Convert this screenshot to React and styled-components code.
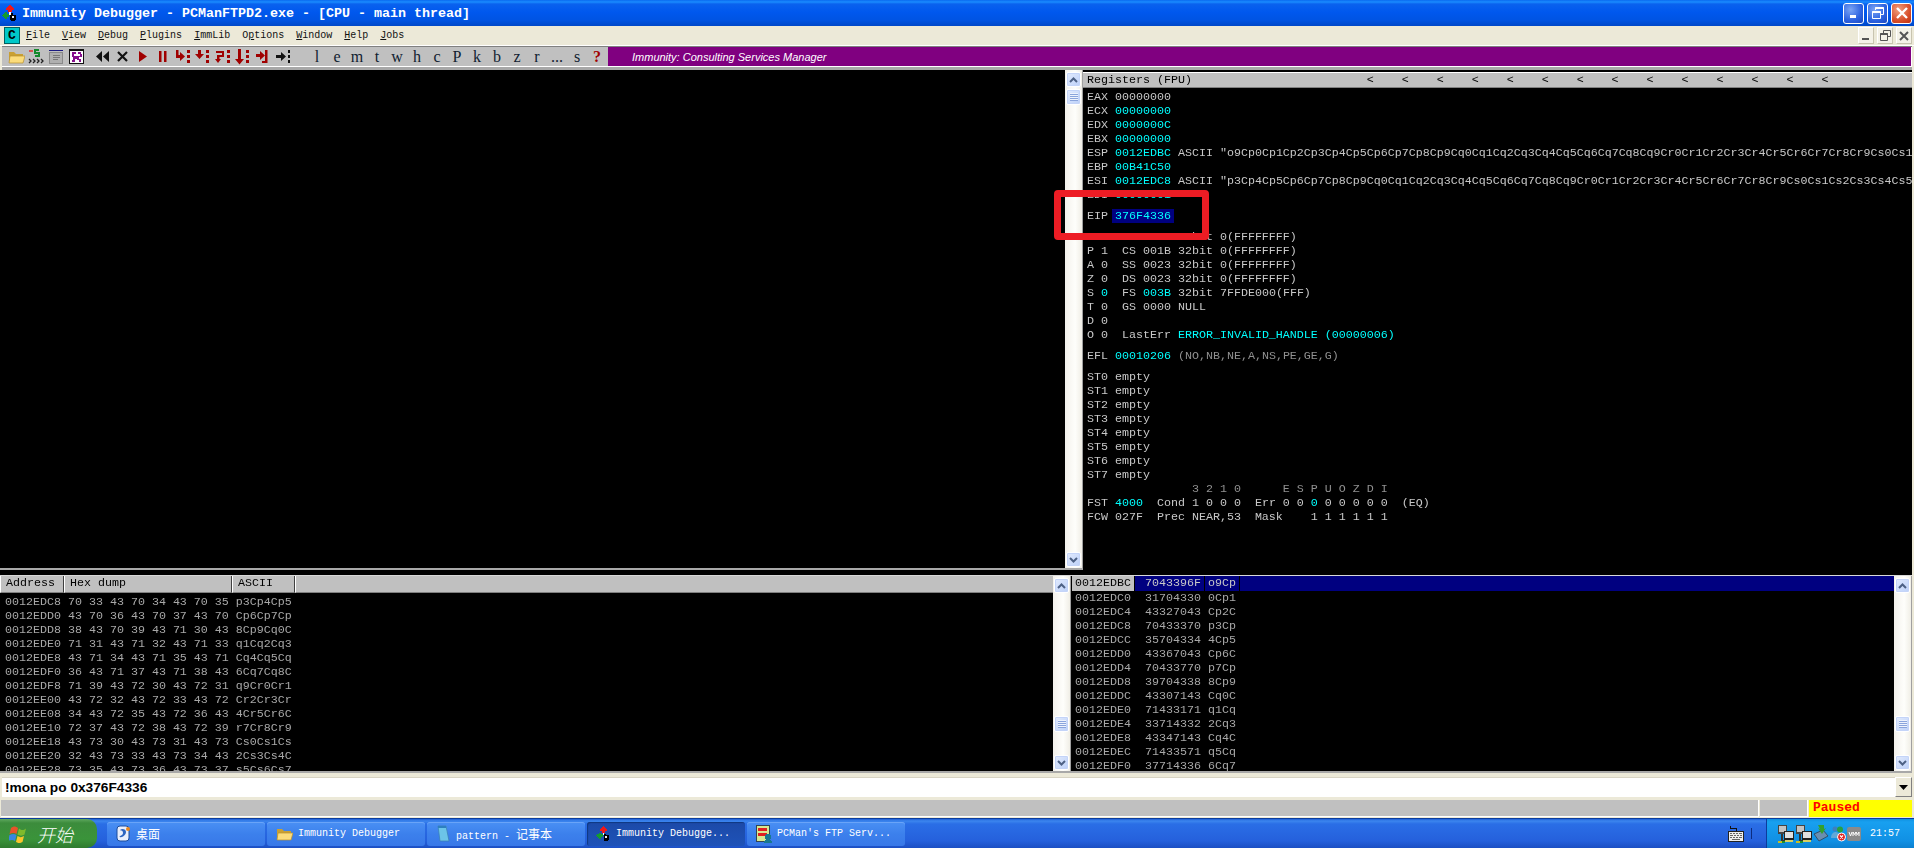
import styled, { createGlobalStyle } from "styled-components";

const MONO = `"Liberation Mono", "DejaVu Sans Mono", monospace`;

const GlobalStyle = createGlobalStyle`
  html, body {
    margin: 0;
    padding: 0;
    background: #ece9d8;
    overflow: hidden;
  }
  * {
    box-sizing: border-box;
  }
`;

const AppIcon = ({ size = 16 }) => (
  <svg width={size} height={size} viewBox="0 0 16 16" shapeRendering="crispEdges">
    <path d="M7 0h2v1h1v1h1v1h1v2h-2v2H6V5H4V3h1V2h1V1h1z" fill="#f01818" />
    <path d="M0 10h1V9h1V8h1V7h2v2h2v3H5v2H3v-1H2v-1H1v-1H0z" fill="#149a30" />
    <path d="M7 7h2v3H7z" fill="#fff" />
    <path d="M9 8h2v2h3v5h-1v1H9v-1H8v-5h1z" fill="#000" />
    <path d="M10 11h2v2h-2z" fill="#eee" />
  </svg>
);

const FolderIcon = () => (
  <svg width="17" height="14" viewBox="0 0 17 14">
    <path d="M1 2h5l2 2h7v9H1z" fill="#c9a033" />
    <path d="M1 13l1-7h15l-2 7z" fill="#fbdc7c" stroke="#b8912f" strokeWidth=".7" />
  </svg>
);

const RunIcon = () => (
  <svg width="16" height="16" viewBox="0 0 16 16" fill="none">
    <path d="M1 2h4" stroke="#e02020" strokeWidth="1.4" />
    <path d="M11 1H7v3h4v3H7" stroke="#148a2c" strokeWidth="2" />
    <path d="M1 10l2 2-2 2M5 10l2 2-2 2M9 10l2 2-2 2M13 10l2 2-2 2" stroke="#222" strokeWidth="1.3" />
  </svg>
);

const LogIcon = () => (
  <svg width="14" height="14" viewBox="0 0 14 14" shapeRendering="crispEdges">
    <path d="M0 0h14v1H0z" fill="#1a1a80" />
    <path d="M0 2h14v12H0z" fill="#8a8a8a" />
    <path d="M1 3h12v10H1z" fill="#b0b0b0" />
    <path d="M4 5h7v1H4zM4 7h7v1H4zM4 9h5v1H4z" fill="#777" />
  </svg>
);

const MazeIcon = () => (
  <svg width="15" height="15" viewBox="0 0 15 15" shapeRendering="crispEdges">
    <path d="M0 0h15v15H0z" fill="#111" />
    <path d="M1 2h13v12H1z" fill="#fff" />
    <path d="M3 3h4v2H5v2h6V5H9V3h3v2h1v3h-3v2h2v3h-2v-2H8v-1H6v3H3v-2h1V8H3z" fill="#86108c" />
  </svg>
);

const Dots = ({ x = 11, color = "#a00000" }) => (
  <g fill={color} shapeRendering="crispEdges">
    <rect x={x} y="1" width="2.5" height="3" />
    <rect x={x} y="6" width="2.5" height="3" />
    <rect x={x} y="11" width="2.5" height="3" />
  </g>
);

const RED = "#a00000";

const ToolIcons = {
  rewind: <path d="M7 2v11L1 7.5zM14 2v11L8 7.5z" fill="#111" />,
  close: <path d="M3 3l9 9M12 3l-9 9" stroke="#111" strokeWidth="2.2" fill="none" />,
  play: <path d="M4 2l8 5.5L4 13z" fill={RED} />,
  pause: <path d="M4 2h2.5v11H4zM9 2h2.5v11H9z" fill={RED} />,
  stepIn: (
    <>
      <path d="M1 1h2.500v5H5V3l5 4.500L5 12V9H1z" fill={RED} />
      <Dots x={12} />
    </>
  ),
  stepOver: (
    <>
      <path d="M3 1h3v4h3L4.500 10 0 5h3z" fill={RED} />
      <Dots x={11} />
    </>
  ),
  traceIn: (
    <>
      <path d="M1 2h8v6H4.500v2H6l-3 4-3-4h2V6h5V4H1z" fill={RED} />
      <Dots x={12} />
    </>
  ),
  traceOver: (
    <>
      <path d="M3 0h3v10h3l-4.500 5.500L0 10h3z" fill={RED} />
      <Dots x={11} />
    </>
  ),
  execTill: (
    <>
      <path d="M1 5h4V2l5 4.500L5 11V8H1z" fill={RED} />
      <path d="M10 1h2.500v13H7v-2h3z" fill={RED} />
    </>
  ),
  goto: (
    <>
      <path d="M1 6h5V3l5 4.500L6 12V9H1z" fill="#111" />
      <Dots x={12.5} color="#111" />
    </>
  ),
};

const ToolGlyph = ({ name }) => (
  <svg width="15" height="16" viewBox="0 0 15 16">{ToolIcons[name]}</svg>
);

const ArrowUp = () => (
  <svg width="9" height="6" viewBox="0 0 9 6" fill="none">
    <path d="M1 5l3.500-3.500L8 5" stroke="#4d6185" strokeWidth="2" />
  </svg>
);

const ArrowDown = () => (
  <svg width="9" height="6" viewBox="0 0 9 6" fill="none">
    <path d="M1 1l3.500 3.500L8 1" stroke="#4d6185" strokeWidth="2" />
  </svg>
);

const Grip = () => (
  <svg width="8" height="8" viewBox="0 0 8 8" shapeRendering="crispEdges">
    <path d="M0 0h8v1H0zM0 2h8v1H0zM0 4h8v1H0zM0 6h8v1H0z" fill="#eef3fd" />
    <path d="M0 1h8v1H0zM0 3h8v1H0zM0 5h8v1H0zM0 7h8v1H0z" fill="#8aa4dc" />
  </svg>
);

const ScrollBar = ({ gap = 2 }) => (
  <ScrollTrack>
    <ScrollButton><ArrowUp /></ScrollButton>
    <ScrollThumb $gap={gap}><Grip /></ScrollThumb>
    <ScrollFill />
    <ScrollButton><ArrowDown /></ScrollButton>
  </ScrollTrack>
);

const NetIcon = () => (
  <svg width="17" height="18" viewBox="0 0 17 18" shapeRendering="crispEdges">
    <path d="M1 0h9v9H1z" fill="#444" />
    <path d="M2 1h7v6H2z" fill="#c4c4c4" />
    <path d="M7 6h10v9H7z" fill="#222" />
    <path d="M8 7h8v6H8z" fill="#e0e0e0" />
    <path d="M4 9h2v6h2v1H4z" fill="#333" />
    <path d="M1 16h6v2H1z" fill="#c8c020" />
    <path d="M8 15h8v2H8z" fill="#d8d060" />
    <path d="M5 16h3v2H5z" fill="#1a9030" />
  </svg>
);

const SafeRemoveIcon = () => (
  <svg width="16" height="17" viewBox="0 0 16 17">
    <path d="M1 9l9-4 5 6-9 5z" fill="#6a8eb0" stroke="#2c4054" strokeWidth=".8" />
    <path d="M5 0h6v4l2-1-4 6-4-6 2 1z" fill="#34a02c" />
  </svg>
);

const MessengerIcon = () => (
  <svg width="16" height="17" viewBox="0 0 16 17">
    <circle cx="5" cy="4" r="2.500" fill="#3c80c0" />
    <circle cx="10" cy="4.500" r="3" fill="#28a040" />
    <path d="M1 13c0-5 3-6 5-6s3 2 3 6z" fill="#60a8d8" />
    <circle cx="11.500" cy="12" r="4" fill="#e02020" stroke="#fff" />
    <path d="M10 10.500l3 3M13 10.500l-3 3" stroke="#fff" strokeWidth="1.200" />
  </svg>
);

const VmIcon = () => (
  <svg width="14" height="14" viewBox="0 0 14 14">
    <rect width="14" height="14" rx="2" fill="#8a8a8a" />
    <path d="M2 5l1.500 4L5 5M6 9V5l1.500 2.500L9 5v4M9 5l1.500 2.500L12 5v4" stroke="#fff" fill="none" strokeWidth="1" />
  </svg>
);

const KeyboardIcon = () => (
  <svg width="16" height="16" viewBox="0 0 16 16" shapeRendering="crispEdges">
    <path d="M2 0h1v2h6v3H8V3H2z" fill="#111" />
    <path d="M0 5h16v11H0z" fill="#222" />
    <path d="M1 6h14v9H1z" fill="#eee" />
    <path d="M2 7h2v1H2zM5 7h2v1H5zM8 7h2v1H8zM11 7h3v1h-3zM2 9h3v1H2zM6 9h2v1H6zM9 9h2v1H9zM12 9h2v1h-2zM2 11h2v1H2zM5 11h2v1H5zM8 11h2v1H8zM11 11h3v1h-3zM4 13h8v1H4z" fill="#666" />
  </svg>
);

const XpFlag = () => (
  <svg width="19" height="19" viewBox="0 0 19 19">
    <path d="M2 4c3-2 4-2 7 0l-1.500 6c-2-1.500-4-1.500-7 0z" fill="#e8532a" />
    <path d="M10 4.500c3 2 4 2 7 0l-1.500 6c-3 1.500-4 1.500-7 0z" fill="#7fba2c" />
    <path d="M.5 11c3-1.500 4.500-1.500 7 0L6 17c-2-1.500-4-1.500-7 0z" fill="#3a86e0" />
    <path d="M8.500 12c2.500 1.500 4 1.500 6.500 0l-1.500 6c-2.500 1.500-4 1.500-6.500 0z" fill="#fbc52c" />
  </svg>
);

const DesktopIcon = () => (
  <svg width="15" height="17" viewBox="0 0 15 17">
    <rect x="1" y="1" width="12" height="15" rx="3" fill="#e8eefc" stroke="#1c4c9c" />
    <path d="M4 5c2-2 6-1 6 2s-4 6-6 5 3-1 3-4-2-2-3-3z" fill="#2c64c0" />
    <circle cx="12" cy="4" r="2" fill="#e88820" />
  </svg>
);

const NotepadIcon = () => (
  <svg width="15" height="17" viewBox="0 0 15 17">
    <path d="M2 1h8l3 15H4z" fill="#6cc4e8" stroke="#3a80b0" strokeWidth=".7" />
    <path d="M2 1h8v2H2z" fill="#2c80c0" />
  </svg>
);

const FtpIcon = () => (
  <svg width="16" height="18" viewBox="0 0 16 18" shapeRendering="crispEdges">
    <path d="M0 0h13v16H0z" fill="#d8e890" stroke="#345" />
    <path d="M2 3h9v3H2zM2 8h9v3H2z" fill="#e02020" />
    <circle cx="12" cy="12" r="3" fill="#187890" />
    <path d="M8 18c0-3 1-3 4-3s4 0 4 3z" fill="#187890" />
  </svg>
);

const MinGlyph = () => (
  <svg width="10" height="10" viewBox="0 0 10 10"><path d="M1 7h6v3H1z" fill="#fff" /></svg>
);

const RestoreGlyph = () => (
  <svg width="12" height="12" viewBox="0 0 12 12" fill="none" stroke="#fff">
    <path d="M3.500 3V.5h8v7H9" strokeWidth="1" />
    <path d="M3.500 1h8" strokeWidth="2" />
    <path d="M.5 4.500h8v7h-8z" strokeWidth="1" />
    <path d="M.5 5h8" strokeWidth="2" />
  </svg>
);

const CloseGlyph = () => (
  <svg width="12" height="12" viewBox="0 0 12 12"><path d="M1 1l10 10M11 1L1 11" stroke="#fff" strokeWidth="2.400" /></svg>
);

const ChildMin = () => (
  <svg width="10" height="10" viewBox="0 0 10 10"><path d="M1 7h7v2H1z" fill="#555" /></svg>
);

const ChildRestore = () => (
  <svg width="11" height="11" viewBox="0 0 11 11" fill="none" stroke="#555">
    <path d="M3.500 3V.5h7v6H8" />
    <path d="M.5 3.500h7v7h-7z" />
    <path d="M.5 4h7" strokeWidth="2" />
  </svg>
);

const ChildClose = () => (
  <svg width="10" height="10" viewBox="0 0 10 10"><path d="M1 1l8 8M9 1L1 9" stroke="#555" strokeWidth="2" /></svg>
);

const Menu = [
  ["", "F", "ile"],
  ["", "V", "iew"],
  ["", "D", "ebug"],
  ["", "P", "lugins"],
  ["", "I", "mmLib"],
  ["O", "p", "tions"],
  ["", "W", "indow"],
  ["", "H", "elp"],
  ["", "J", "obs"],
];

const letters = ["l", "e", "m", "t", "w", "h", "c", "P", "k", "b", "z", "r", "..."];

const headerMarks = Array(14).fill("<").join("    ");

const dumpRows = [
  "0012EDC8 70 33 43 70 34 43 70 35 p3Cp4Cp5",
  "0012EDD0 43 70 36 43 70 37 43 70 Cp6Cp7Cp",
  "0012EDD8 38 43 70 39 43 71 30 43 8Cp9Cq0C",
  "0012EDE0 71 31 43 71 32 43 71 33 q1Cq2Cq3",
  "0012EDE8 43 71 34 43 71 35 43 71 Cq4Cq5Cq",
  "0012EDF0 36 43 71 37 43 71 38 43 6Cq7Cq8C",
  "0012EDF8 71 39 43 72 30 43 72 31 q9Cr0Cr1",
  "0012EE00 43 72 32 43 72 33 43 72 Cr2Cr3Cr",
  "0012EE08 34 43 72 35 43 72 36 43 4Cr5Cr6C",
  "0012EE10 72 37 43 72 38 43 72 39 r7Cr8Cr9",
  "0012EE18 43 73 30 43 73 31 43 73 Cs0Cs1Cs",
  "0012EE20 32 43 73 33 43 73 34 43 2Cs3Cs4C",
  "0012EE28 73 35 43 73 36 43 73 37 s5Cs6Cs7",
];

const stackRows = [
  "0012EDC0  31704330 0Cp1",
  "0012EDC4  43327043 Cp2C",
  "0012EDC8  70433370 p3Cp",
  "0012EDCC  35704334 4Cp5",
  "0012EDD0  43367043 Cp6C",
  "0012EDD4  70433770 p7Cp",
  "0012EDD8  39704338 8Cp9",
  "0012EDDC  43307143 Cq0C",
  "0012EDE0  71433171 q1Cq",
  "0012EDE4  33714332 2Cq3",
  "0012EDE8  43347143 Cq4C",
  "0012EDEC  71433571 q5Cq",
  "0012EDF0  37714336 6Cq7",
];

const Registers = () => (
  <>
    <Group>
      <Line>EAX 00000000</Line>
      <Line>ECX <Cyan>00000000</Cyan></Line>
      <Line>EDX <Cyan>0000000C</Cyan></Line>
      <Line>EBX <Cyan>00000000</Cyan></Line>
      <Line>ESP <Cyan>0012EDBC</Cyan> ASCII "o9Cp0Cp1Cp2Cp3Cp4Cp5Cp6Cp7Cp8Cp9Cq0Cq1Cq2Cq3Cq4Cq5Cq6Cq7Cq8Cq9Cr0Cr1Cr2Cr3Cr4Cr5Cr6Cr7Cr8Cr9Cs0Cs1</Line>
      <Line>EBP <Cyan>00B41C50</Cyan></Line>
      <Line>ESI <Cyan>0012EDC8</Cyan> ASCII "p3Cp4Cp5Cp6Cp7Cp8Cp9Cq0Cq1Cq2Cq3Cq4Cq5Cq6Cq7Cq8Cq9Cr0Cr1Cr2Cr3Cr4Cr5Cr6Cr7Cr8Cr9Cs0Cs1Cs2Cs3Cs4Cs5</Line>
      <Line>EDI <Cyan>00000001</Cyan></Line>
    </Group>
    <Group $gap>
      <Line>EIP <Highlight>376F4336</Highlight></Line>
    </Group>
    <Group $gap>
      <Line>C 0  ES 0023 32bit 0(FFFFFFFF)</Line>
      <Line>P 1  CS 001B 32bit 0(FFFFFFFF)</Line>
      <Line>A 0  SS 0023 32bit 0(FFFFFFFF)</Line>
      <Line>Z 0  DS 0023 32bit 0(FFFFFFFF)</Line>
      <Line>S <Cyan>0</Cyan>  FS <Cyan>003B</Cyan> 32bit 7FFDE000(FFF)</Line>
      <Line>T 0  GS 0000 NULL</Line>
      <Line>D 0</Line>
      <Line>O 0  LastErr <Cyan>ERROR_INVALID_HANDLE (00000006)</Cyan></Line>
    </Group>
    <Group $gap>
      <Line>EFL <Cyan>00010206</Cyan> <Dim>(NO,NB,NE,A,NS,PE,GE,G)</Dim></Line>
    </Group>
    <Group $gap>
      {[0, 1, 2, 3, 4, 5, 6, 7].map((n) => (
        <Line key={n}>ST{n} empty</Line>
      ))}
      <Line><Dim>{"               3 2 1 0      E S P U O Z D I"}</Dim></Line>
      <Line>FST <Cyan>4000</Cyan>  Cond 1 0 0 0  Err 0 0 <Cyan>0</Cyan> 0 0 0 0 0  (EQ)</Line>
      <Line>FCW 027F  Prec NEAR,53  Mask    1 1 1 1 1 1</Line>
    </Group>
  </>
);

const App = () => (
  <Page>
    <GlobalStyle />
    <TitleBar>
      <TitleIcon><AppIcon /></TitleIcon>
      <TitleText>Immunity Debugger - PCManFTPD2.exe - [CPU - main thread]</TitleText>
      <WinButton><MinGlyph /></WinButton>
      <WinButton><RestoreGlyph /></WinButton>
      <WinButton $close><CloseGlyph /></WinButton>
    </TitleBar>

    <MenuBar>
      <CpuBadge>C</CpuBadge>
      {Menu.map(([pre, key, rest]) => (
        <MenuItem key={key}>{pre}<u>{key}</u>{rest}</MenuItem>
      ))}
      <MenuSpacer />
      <ChildButton><ChildMin /></ChildButton>
      <ChildButton><ChildRestore /></ChildButton>
      <ChildButton><ChildClose /></ChildButton>
    </MenuBar>

    <ToolbarWrap>
      <Toolbar>
        <ToolButton><FolderIcon /></ToolButton>
        <ToolButton><RunIcon /></ToolButton>
        <ToolButton><LogIcon /></ToolButton>
        <ToolButton><MazeIcon /></ToolButton>
        <ToolGap $w={6} />
        {Object.keys(ToolIcons).map((name) => (
          <ToolButton key={name}><ToolGlyph name={name} /></ToolButton>
        ))}
        <ToolGap $w={15} />
        {letters.map((l) => (
          <LetterButton key={l}>{l}</LetterButton>
        ))}
        <LetterButton>s</LetterButton>
        <LetterButton $help>?</LetterButton>
        <Banner>Immunity: Consulting Services Manager</Banner>
      </Toolbar>
    </ToolbarWrap>

    <TopPanes>
      <LeftColumn>
        <CpuRow>
          <BlackFill />
          <ScrollBar />
        </CpuRow>
        <CpuDivider />
      </LeftColumn>
      <RegisterPane>
        <PaneHeader>{"Registers (FPU)                         " + headerMarks}</PaneHeader>
        <Registers />
      </RegisterPane>
      <RedBox />
    </TopPanes>

    <BottomPanes>
      <DumpPane>
        <HeaderRow>
          <HeaderCell $w={64}>Address</HeaderCell>
          <HeaderCell $w={168}>Hex dump</HeaderCell>
          <HeaderCell $w={63}>ASCII</HeaderCell>
          <HeaderCell $fill />
        </HeaderRow>
        {dumpRows.map((row) => (
          <DumpLine key={row}>{row}</DumpLine>
        ))}
      </DumpPane>
      <ScrollBar gap={123} />
      <StackPane>
        <SelectedRow>
          <SelectedAddr>0012EDBC</SelectedAddr>
          <SelectedValue>7043396F</SelectedValue>
          <SelectedAscii>o9Cp</SelectedAscii>
          <SelectedFill />
        </SelectedRow>
        {stackRows.map((row) => (
          <StackLine key={row}>{row}</StackLine>
        ))}
      </StackPane>
      <ScrollBar gap={123} />
    </BottomPanes>

    <CommandRow>
      <CommandInput>!mona po 0x376F4336</CommandInput>
      <ComboButton>
        <svg width="9" height="5" viewBox="0 0 9 5"><path d="M0 0h9L4.500 5z" fill="#000" /></svg>
      </ComboButton>
    </CommandRow>

    <StatusBar>
      <StatusCell $fill />
      <StatusCell $w={48} />
      <PausedCell>Paused</PausedCell>
    </StatusBar>

    <Taskbar>
      <StartButton>
        <XpFlag />
        <StartLabel>开始</StartLabel>
      </StartButton>
      <TaskButton><DesktopIcon /><TaskCjk>桌面</TaskCjk></TaskButton>
      <TaskButton><FolderIcon /><span>Immunity Debugger</span></TaskButton>
      <TaskButton><NotepadIcon /><span>pattern - <TaskCjk>记事本</TaskCjk></span></TaskButton>
      <TaskButton $active><AppIcon size={15} /><span>Immunity Debugge...</span></TaskButton>
      <TaskButton><FtpIcon /><span>PCMan's FTP Serv...</span></TaskButton>
      <TaskSpacer />
      <KeyboardIcon />
      <TaskSeparator />
      <Tray>
        <NetIcon />
        <NetIcon />
        <SafeRemoveIcon />
        <MessengerIcon />
        <VmIcon />
        <Clock>21:57</Clock>
      </Tray>
    </Taskbar>
  </Page>
);

const Page = styled.div`
  width: 1914px;
  height: 848px;
  display: flex;
  flex-direction: column;
  background: #ece9d8;
  font-family: ${MONO};
  overflow: hidden;
`;

const TitleBar = styled.div`
  height: 26px;
  flex: none;
  display: flex;
  align-items: center;
  padding: 0 2px;
  gap: 3px;
  background: linear-gradient(180deg, #0a6af0 0, #1a8cff 2px, #0a62ee 4px, #0058ee 12px, #0054e3 20px, #0048c8 26px);
`;

const TitleIcon = styled.div`
  display: flex;
  width: 17px;
`;

const TitleText = styled.div`
  flex: 1;
  color: #fff;
  font-size: 13.33px;
  font-weight: bold;
  white-space: pre;
`;

const WinButton = styled.div`
  width: 21px;
  height: 21px;
  display: flex;
  align-items: center;
  justify-content: center;
  border: 1px solid #fff;
  border-radius: 3px;
  background: ${(p) =>
    p.$close
      ? "radial-gradient(circle at 35% 30%, #f0a080, #d8502c 60%, #c03010)"
      : "radial-gradient(circle at 35% 30%, #7aa4f4, #2c62e0 60%, #1c48c0)"};
`;

const MenuBar = styled.div`
  height: 19px;
  flex: none;
  display: flex;
  align-items: center;
  padding: 0 2px 0 4px;
  background: #ece9d8;
`;

const CpuBadge = styled.div`
  width: 16px;
  height: 17px;
  display: flex;
  align-items: center;
  justify-content: center;
  background: #00c8c8;
  border: 1px solid #006060;
  font-size: 13px;
  font-weight: bold;
  color: #000;
`;

const MenuItem = styled.div`
  padding: 0 6px;
  font-size: 10px;
  color: #111;
  white-space: pre;
`;

const MenuSpacer = styled.div`
  flex: 1;
`;

const ChildButton = styled.div`
  width: 16px;
  height: 17px;
  margin-left: 3px;
  display: flex;
  align-items: center;
  justify-content: center;
  background: #f4f2e8;
  border: 1px solid #fff;
  border-bottom-color: #c8c4b0;
  border-right-color: #c8c4b0;
`;

const ToolbarWrap = styled.div`
  height: 25px;
  flex: none;
  padding: 1px 2px 0 2px;
  background: linear-gradient(180deg, #fff 0 1px, #ece9d8 1px);
  display: flex;
  flex-direction: column;
`;

const Toolbar = styled.div`
  height: 21px;
  flex: none;
  display: flex;
  align-items: stretch;
  padding-left: 4px;
  background: #c0c0c0;
  border-top: 1px solid #808080;
  border-bottom: 1px solid #fff;
  box-shadow: 0 3px 0 #a8a8a8;
`;

const ToolButton = styled.div`
  width: 20px;
  flex: none;
  display: flex;
  align-items: center;
  justify-content: center;
`;

const ToolGap = styled.div`
  width: ${(p) => p.$w}px;
  flex: none;
`;

const LetterButton = styled.div`
  width: 20px;
  flex: none;
  display: flex;
  align-items: center;
  justify-content: center;
  font-family: "Liberation Serif", serif;
  font-size: 16px;
  font-weight: ${(p) => (p.$help ? "bold" : "normal")};
  color: ${(p) => (p.$help ? "#a00000" : "#102030")};
`;

const Banner = styled.div`
  flex: 1;
  margin-left: 1px;
  padding-left: 24px;
  display: flex;
  align-items: center;
  background: #800080;
  border-right: 1px solid #fff;
  color: #fff;
  font-family: "Liberation Sans", Arial, sans-serif;
  font-style: italic;
  font-size: 11px;
`;

const TopPanes = styled.div`
  position: relative;
  height: 505px;
  flex: none;
  display: flex;
  background: #000;
  margin-right: 2px;
`;

const LeftColumn = styled.div`
  width: 1083px;
  flex: none;
  display: flex;
  flex-direction: column;
`;

const CpuRow = styled.div`
  height: 498px;
  flex: none;
  display: flex;
`;

const CpuDivider = styled.div`
  height: 2px;
  background: #a8a8a8;
`;

const BlackFill = styled.div`
  flex: 1;
  background: #000;
`;

const ScrollTrack = styled.div`
  width: 18px;
  flex: none;
  display: flex;
  flex-direction: column;
  padding: 2px 1px 1px;
  background: linear-gradient(90deg, #f3f1ec, #fefefb 60%, #f0eee6);
  border-right: 1px solid #a0a0a0;
`;

const ScrollButton = styled.div`
  width: 15px;
  height: 15px;
  flex: none;
  display: flex;
  align-items: center;
  justify-content: center;
  background: linear-gradient(135deg, #e2ebfe, #bcd0f8);
  border: 1px solid #fff;
  border-radius: 2px;
  box-shadow: 0 0 0 1px #c4d4f8 inset;
`;

const ScrollThumb = styled(ScrollButton)`
  height: 16px;
  margin-top: ${(p) => p.$gap}px;
`;

const ScrollFill = styled.div`
  flex: 1;
`;

const RegisterPane = styled.div`
  flex: 1;
  min-width: 0;
  padding-top: 2px;
  overflow: hidden;
  color: #c8c8c8;
  font-size: 11.67px;
  will-change: transform;
`;

const PaneHeader = styled.div`
  height: 16px;
  margin-bottom: 2px;
  padding-left: 4px;
  background: #c0c0c0;
  border-top: 1px solid #fff;
  border-bottom: 1px solid #808080;
  color: #000;
  line-height: 14px;
  font-size: 11.67px;
  white-space: pre;
`;

const Group = styled.div`
  margin-top: ${(p) => (p.$gap ? "7px" : "0")};
  padding-left: 4px;
`;

const Line = styled.div`
  height: 14px;
  line-height: 14px;
  white-space: pre;
`;

const Cyan = styled.span`
  color: #00ffff;
`;

const Dim = styled.span`
  color: #909090;
`;

const Highlight = styled.span`
  display: inline-block;
  height: 14px;
  margin: 0 -3px;
  padding: 0 3px;
  background: #000080;
  color: #00ffff;
`;

const RedBox = styled.div`
  position: absolute;
  left: 1054px;
  top: 120px;
  width: 155px;
  height: 50px;
  border: 7px solid #ed1c24;
  border-radius: 4px;
`;

const BottomPanes = styled.div`
  height: 198px;
  flex: none;
  display: flex;
  border-top: 1px solid #d8d8d8;
  border-bottom: 2px solid #a8a8a8;
  margin-right: 2px;
  background: #000;
  color: #a8a8a8;
  font-size: 11.67px;
`;

const DumpPane = styled.div`
  width: 1053px;
  flex: none;
  overflow: hidden;
  will-change: transform;
`;

const HeaderRow = styled.div`
  height: 17px;
  display: flex;
  margin-bottom: 2px;
  background: #c0c0c0;
`;

const HeaderCell = styled.div`
  ${(p) => (p.$fill ? "flex: 1;" : `width: ${p.$w}px; flex: none;`)}
  padding-left: 5px;
  line-height: 15px;
  color: #000;
  font-size: 11.67px;
  white-space: pre;
  border-left: 1px solid #fff;
  border-right: ${(p) => (p.$fill ? "0" : "1px solid #404040")};
  border-bottom: 1px solid #808080;
`;

const DumpLine = styled.div`
  height: 14px;
  line-height: 14px;
  padding-left: 5px;
  white-space: pre;
`;

const StackPane = styled.div`
  flex: 1;
  min-width: 0;
  overflow: hidden;
  margin-left: 1px;
  will-change: transform;
`;

const SelectedRow = styled.div`
  height: 15px;
  display: flex;
  background: #000080;
  color: #c8c8c8;
  line-height: 14px;
  white-space: pre;
`;

const SelectedAddr = styled.div`
  width: 62px;
  flex: none;
  padding-left: 3px;
  background: #c0c0c0;
  color: #000;
`;

const SelectedValue = styled.div`
  width: 71px;
  flex: none;
  padding-left: 10px;
  border-left: 1px solid #000;
  border-right: 1px solid #000;
`;

const SelectedAscii = styled.div`
  width: 35px;
  flex: none;
  padding-left: 3px;
  border-right: 1px solid #000;
`;

const SelectedFill = styled.div`
  flex: 1;
`;

const StackLine = styled.div`
  height: 14px;
  line-height: 14px;
  padding-left: 3px;
  white-space: pre;
`;

const CommandRow = styled.div`
  height: 26px;
  flex: none;
  display: flex;
  align-items: flex-end;
  padding: 0 2px 2px 2px;
  background: #ece9d8;
`;

const CommandInput = styled.div`
  flex: 1;
  height: 20px;
  line-height: 20px;
  padding-left: 3px;
  background: #fff;
  border-top: 1px solid #d8d4c4;
  font-family: "Liberation Sans", Arial, sans-serif;
  font-weight: bold;
  font-size: 13.7px;
  color: #000;
`;

const ComboButton = styled.div`
  width: 17px;
  height: 20px;
  flex: none;
  display: flex;
  align-items: center;
  justify-content: center;
  background: #ece9d8;
  border: 1px solid;
  border-color: #fff #808080 #808080 #fff;
`;

const StatusBar = styled.div`
  height: 19px;
  flex: none;
  display: flex;
  padding: 1px 2px 1px 1px;
  gap: 1px;
  background: #ece9d8;
`;

const StatusCell = styled.div`
  ${(p) => (p.$fill ? "flex: 1;" : `width: ${p.$w}px; flex: none;`)}
  background: #c0c0c0;
  border-bottom: 1px solid #fff;
  border-right: 1px solid #fff;
`;

const PausedCell = styled.div`
  width: 103px;
  flex: none;
  padding-left: 4px;
  background: #ffff00;
  color: #ff0000;
  font-size: 13px;
  font-weight: bold;
  line-height: 16px;
  white-space: pre;
`;

const Taskbar = styled.div`
  height: 30px;
  flex: none;
  display: flex;
  align-items: center;
  background: linear-gradient(180deg, #1f5fd8 0, #3c86ee 2px, #2a6ee6 5px, #2560dc 22px, #1a4cc0 30px);
  border-top: 1px solid #0c3c9c;
  color: #fff;
  font-size: 10px;
`;

const StartButton = styled.div`
  width: 97px;
  height: 29px;
  flex: none;
  margin-right: 10px;
  padding-left: 9px;
  display: flex;
  align-items: center;
  gap: 9px;
  background: linear-gradient(180deg, #5ea85e 0, #3c8c3c 4px, #3a943a 20px, #2e7a2e 29px);
  border-radius: 0 10px 10px 0;
`;

const StartLabel = styled.span`
  font-family: "Noto Sans CJK SC", sans-serif;
  font-size: 18px;
  font-style: italic;
  font-weight: 300;
  color: #fff;
`;

const TaskButton = styled.div`
  width: 158px;
  height: 24px;
  flex: none;
  margin-right: 2px;
  padding-left: 9px;
  display: flex;
  align-items: center;
  gap: 5px;
  white-space: pre;
  border-radius: 3px;
  background: ${(p) =>
    p.$active
      ? "linear-gradient(180deg, #1c4aa8, #1e52b8)"
      : "linear-gradient(180deg, #4a90f4, #3c80ec 50%, #3878e8)"};
  box-shadow: ${(p) => (p.$active ? "inset 1px 1px 1px #103880" : "inset 0 1px 0 #6aa4f8")};
`;

const TaskCjk = styled.span`
  font-family: "Noto Sans CJK SC", sans-serif;
  font-size: 12px;
`;

const TaskSpacer = styled.div`
  flex: 1;
`;

const TaskSeparator = styled.div`
  width: 1px;
  height: 11px;
  margin: 0 14px 0 7px;
  background: #0c2c80;
`;

const Tray = styled.div`
  width: 148px;
  height: 29px;
  flex: none;
  display: flex;
  align-items: center;
  gap: 1px;
  padding-left: 10px;
  background: linear-gradient(180deg, #1090e0 0, #18a0f0 3px, #1090e4 22px, #0c80d0 29px);
  border-left: 1px solid #0c3c9c;
`;

const Clock = styled.span`
  margin-left: 8px;
  font-size: 10px;
  color: #fff;
`;

export default App;
